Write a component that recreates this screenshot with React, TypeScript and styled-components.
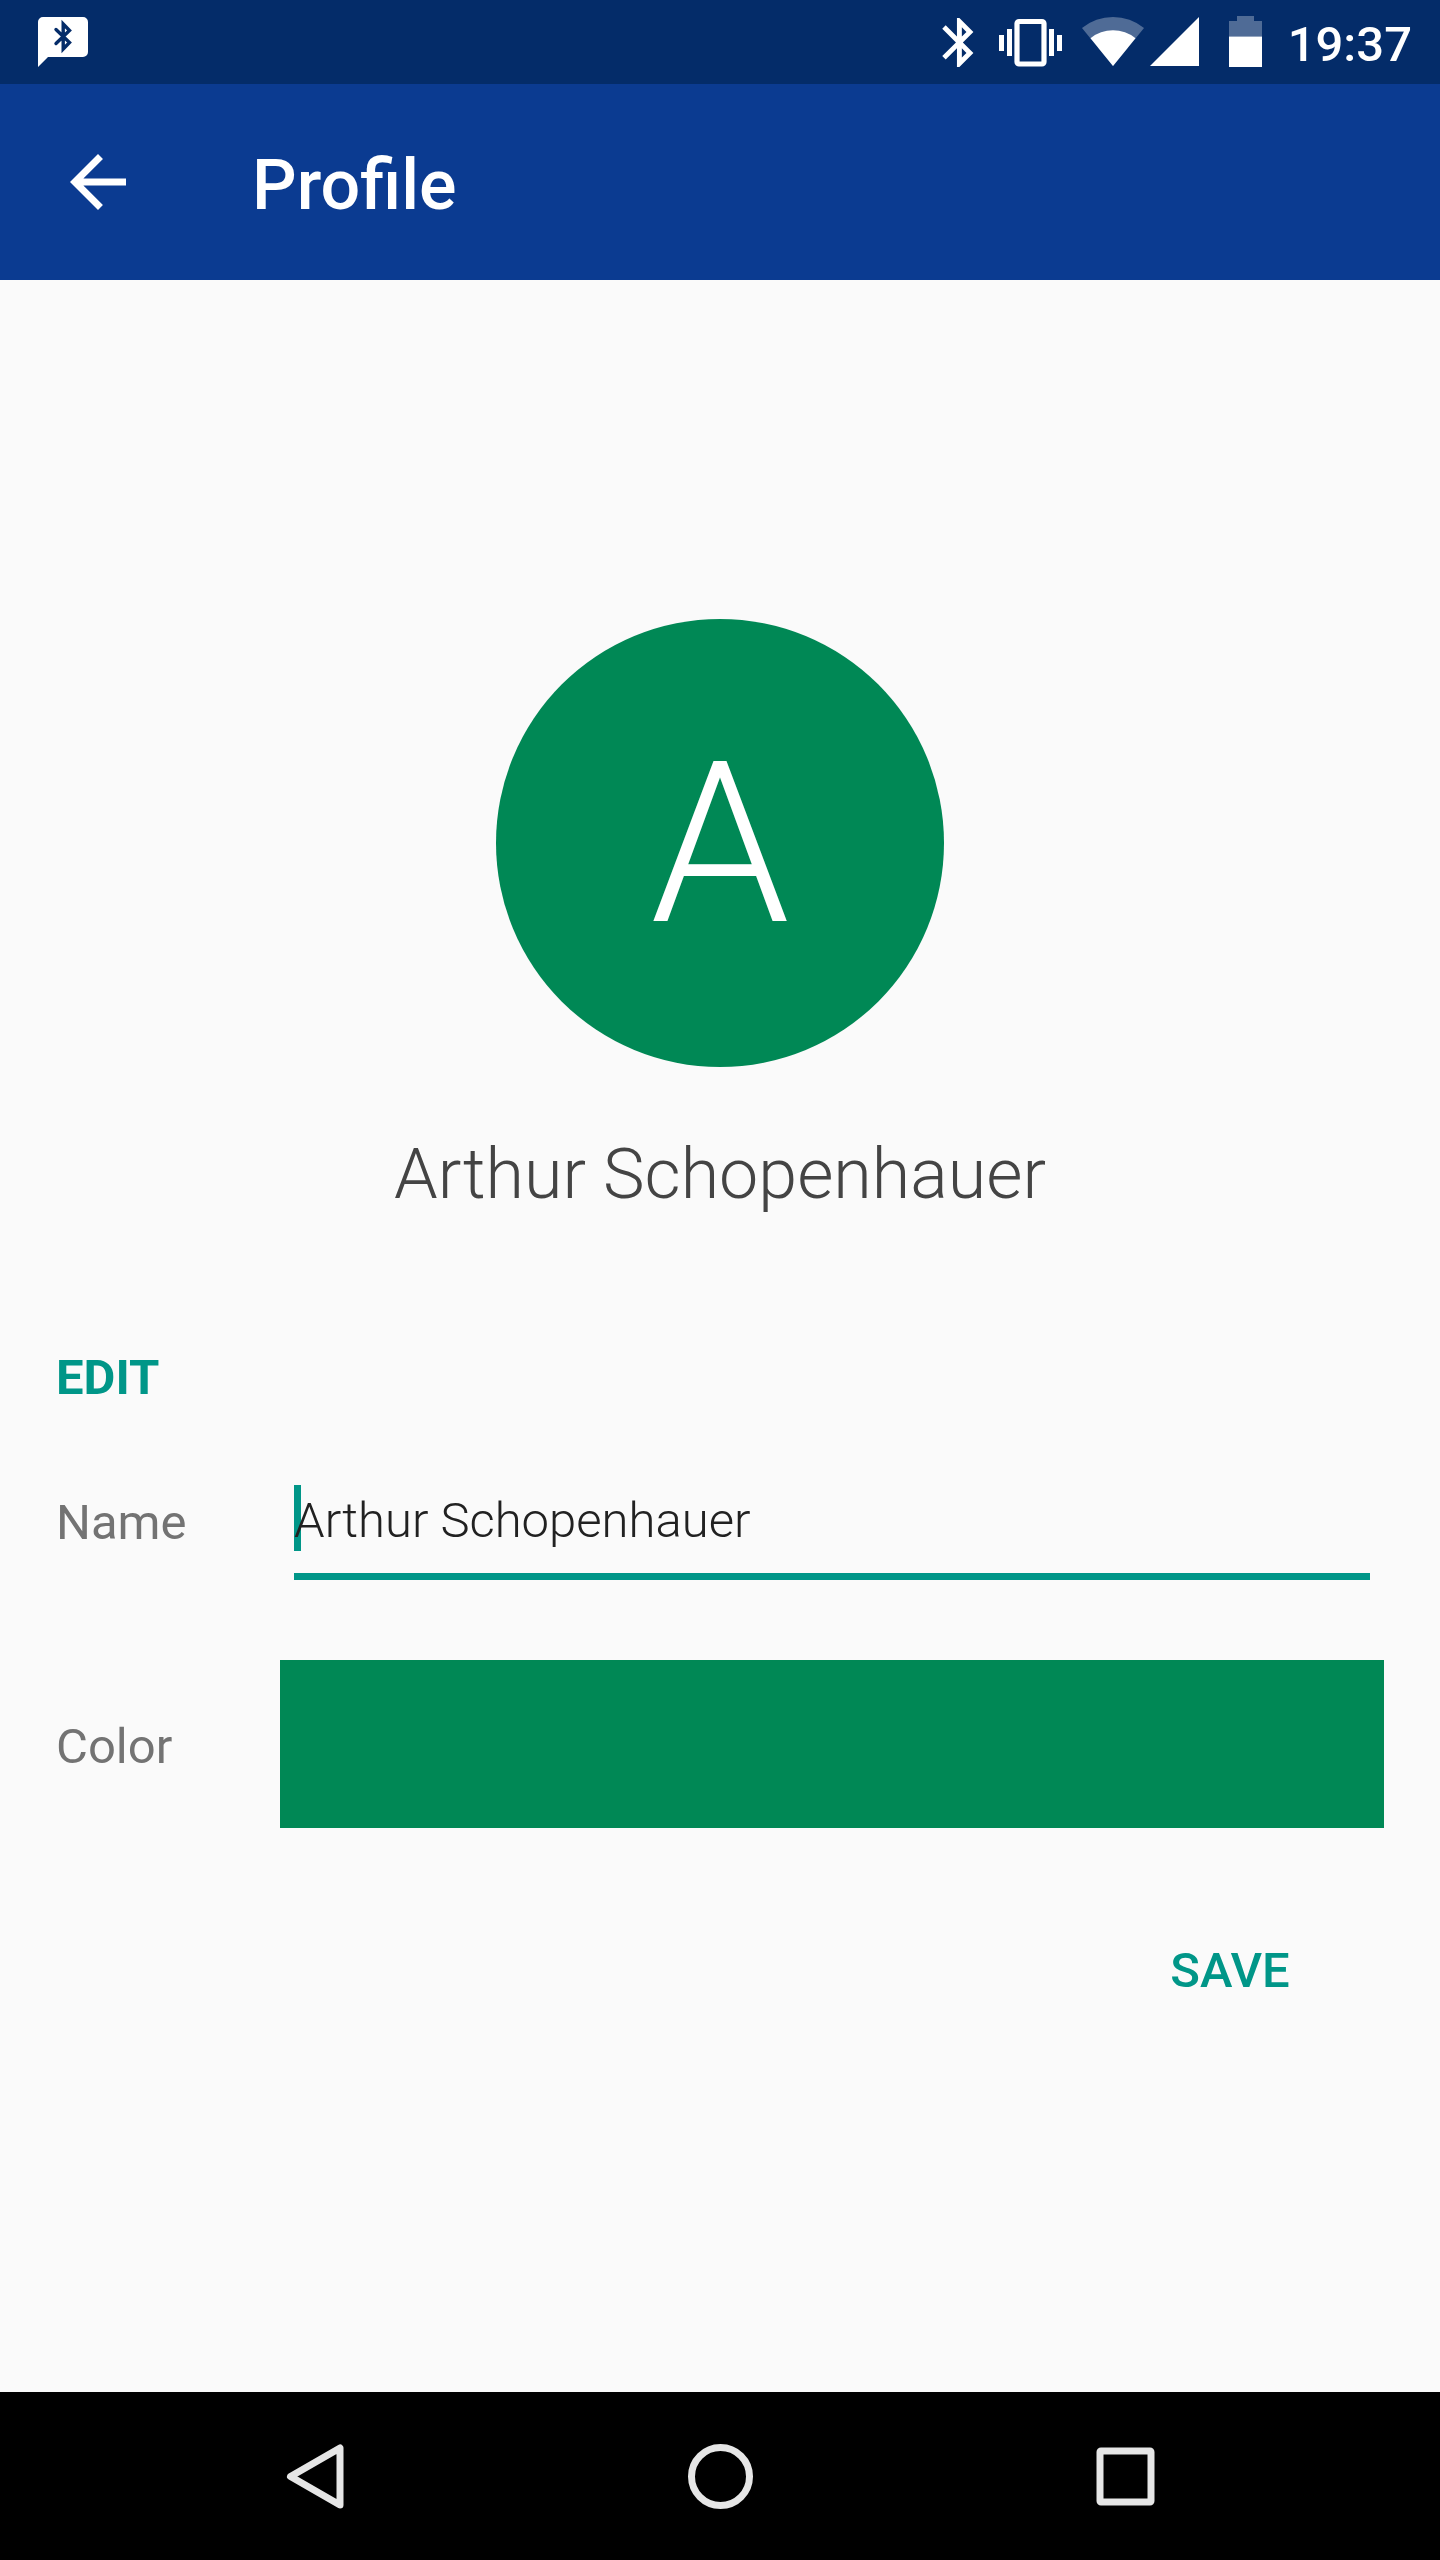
import React, { useState } from "react";
import styled, { createGlobalStyle } from "styled-components";

const color = {
  status: "#042c69",
  primary: "#0b3b91",
  accent: "#009688",
  page: "#fafafa",
  label: "#737373",
  heading: "#444444",
  text: "#212121",
  nav: "#e6e6e6",
};

const GlobalStyle = createGlobalStyle`
  *, *::before, *::after { box-sizing: border-box; }
  body {
    margin: 0;
    background: ${color.page};
    font-family: Roboto, "Noto Sans", sans-serif;
  }
`;

const Screen = styled.div`
  display: flex;
  flex-direction: column;
  min-height: 100vh;
`;

const StatusBar = styled.div`
  display: flex;
  align-items: center;
  justify-content: space-between;
  height: 84px;
  padding: 0 28px;
  background: ${color.status};
  color: #fff;
`;

const StatusGroup = styled.div`
  display: flex;
  align-items: center;
`;

const StatusIcon = styled.svg`
  display: block;
  height: 84px;
  fill: currentColor;
`;

const Clock = styled.time`
  padding-left: 10px;
  padding-top: 5px;
  font-size: 49px;
  line-height: 58px;
  font-weight: 500;
`;

const Toolbar = styled.header`
  display: flex;
  align-items: center;
  gap: 112px;
  height: 196px;
  padding: 0 56px;
  background: ${color.primary};
  color: #fff;
`;

const IconButton = styled.button`
  display: flex;
  align-items: center;
  justify-content: center;
  padding: 0;
  border: 0;
  background: none;
  color: inherit;
  cursor: pointer;
`;

const Title = styled.h1`
  margin: 0;
  padding-top: 6px;
  font-size: 70px;
  line-height: 82px;
  font-weight: 500;
`;

const Content = styled.main`
  flex: 1;
  padding: 0 56px 56px;
`;

const Hero = styled.section`
  display: flex;
  flex-direction: column;
  align-items: center;
  gap: 66px;
  padding: 339px 0 134px;
`;

const Avatar = styled.div<{ $fill: string }>`
  display: flex;
  align-items: center;
  justify-content: center;
  width: 448px;
  height: 448px;
  padding-top: 4px;
  border-radius: 50%;
  background: ${(p) => p.$fill};
  color: #fff;
  font-size: 224px;
  line-height: 262px;
  font-weight: 300;
`;

const PersonName = styled.h2`
  margin: 0;
  color: ${color.heading};
  font-size: 70px;
  line-height: 82px;
  font-weight: 300;
  text-align: center;
`;

const SectionTitle = styled.h3`
  margin: 0;
  color: ${color.accent};
  font-size: 49px;
  line-height: 58px;
  font-weight: 700;
  text-transform: uppercase;
`;

const Form = styled.form`
  display: flex;
  flex-direction: column;
  gap: 56px;
  margin-top: 29px;
`;

const FieldRow = styled.div`
  display: grid;
  grid-template-columns: 224px 1fr;
  align-items: center;
`;

const FieldLabel = styled.label`
  padding-top: 5px;
  color: ${color.label};
  font-size: 49px;
  line-height: 58px;
`;

const TextField = styled.div`
  position: relative;
  height: 168px;
  margin: 0 14px;
  padding: 50px 0 24px;
`;

const Caret = styled.span`
  position: absolute;
  left: 0;
  top: 49px;
  width: 7px;
  height: 66px;
  background: ${color.accent};
`;

const TextInput = styled.input`
  position: relative;
  display: block;
  width: 100%;
  height: 94px;
  padding: 0 0 18px;
  border: 0;
  border-bottom: 7px solid ${color.accent};
  outline: 0;
  background: transparent;
  color: ${color.text};
  caret-color: ${color.accent};
  font: 300 49px/58px Roboto, "Noto Sans", sans-serif;
`;

const ColorInput = styled.input`
  display: block;
  width: 100%;
  height: 168px;
  padding: 0;
  border: 0;
  background: none;
  cursor: pointer;
  appearance: none;

  &::-webkit-color-swatch-wrapper { padding: 0; }
  &::-webkit-color-swatch { border: 0; border-radius: 0; }
`;

const SaveButton = styled.button`
  align-self: flex-end;
  min-width: 308px;
  height: 168px;
  padding: 5px 28px 0;
  border: 0;
  background: none;
  color: ${color.accent};
  font: 500 49px/58px Roboto, "Noto Sans", sans-serif;
  text-transform: uppercase;
  cursor: pointer;
`;

const NavBar = styled.nav`
  display: grid;
  grid-template-columns: repeat(3, 1fr);
  height: 168px;
  padding: 0 112px;
  background: #000;
  color: ${color.nav};
`;

const NavIcon = styled.svg`
  width: 84px;
  height: 84px;
  fill: none;
  stroke: currentColor;
  stroke-width: 7;
  stroke-linejoin: round;
`;

function MessageIcon() {
  return (
    <StatusIcon width={70} viewBox="0 0 70 84" aria-hidden="true">
      <path d="M15 17h40a5 5 0 0 1 5 5v30a5 5 0 0 1-5 5H20L10 67V22a5 5 0 0 1 5-5z" />
      <path
        d="M28 29.5 41.5 42.5 35.2 49V24L41.5 30.5 28 43.5"
        fill="none"
        stroke={color.status}
        strokeWidth="3.4"
        strokeLinecap="round"
      />
    </StatusIcon>
  );
}

function BluetoothIcon() {
  return (
    <StatusIcon width={60} viewBox="0 0 60 84" aria-hidden="true">
      <path
        transform="translate(0 13) scale(2.45)"
        d="M17.71 7.71L12 2h-1v7.59L6.41 5 5 6.41 10.59 12 5 17.59 6.41 19 11 14.41V22h1l5.71-5.71-4.3-4.29 4.3-4.29zM13 5.83l1.88 1.88L13 9.59V5.83zm1.88 10.46L13 18.17v-3.76l1.88 1.88z"
      />
    </StatusIcon>
  );
}

function VibrateIcon() {
  return (
    <StatusIcon width={80} viewBox="0 0 80 84" aria-hidden="true">
      <rect x="27" y="21.5" width="27" height="42.5" rx="2" fill="none" stroke="currentColor" strokeWidth="5.2" />
      <path d="M17 29h5v27h-5zM9 35h5v16H9zM59 29h5v27h-5zM67 35h5v16h-5z" />
    </StatusIcon>
  );
}

function WifiIcon() {
  return (
    <StatusIcon width={77} viewBox="0 0 77 84" aria-hidden="true">
      <path d="M43 66 12 28a49 49 0 0 1 62 0z" opacity="0.3" />
      <path d="M43 66 20.5 38.2a36 36 0 0 1 45 0z" />
    </StatusIcon>
  );
}

function SignalIcon() {
  return (
    <StatusIcon width={67} viewBox="0 0 67 84" aria-hidden="true">
      <path d="M3 66 52 17v49z" />
    </StatusIcon>
  );
}

function BatteryIcon() {
  return (
    <StatusIcon width={64} viewBox="0 0 64 84" aria-hidden="true">
      <path d="M23 16h17v5h8v15.5H15V21h8z" opacity="0.3" />
      <path d="M15 36.5h33V67H15z" />
    </StatusIcon>
  );
}

export default function App() {
  const [name, setName] = useState("Arthur Schopenhauer");
  const [fill, setFill] = useState("#008855");

  return (
    <Screen>
      <GlobalStyle />
      <StatusBar>
        <StatusGroup>
          <MessageIcon />
        </StatusGroup>
        <StatusGroup>
          <BluetoothIcon />
          <VibrateIcon />
          <WifiIcon />
          <SignalIcon />
          <BatteryIcon />
          <Clock>19:37</Clock>
        </StatusGroup>
      </StatusBar>

      <Toolbar>
        <IconButton type="button" aria-label="Back">
          <svg width="84" height="84" viewBox="0 0 24 24" fill="currentColor" aria-hidden="true">
            <path d="M20 11H7.83l5.59-5.59L12 4l-8 8 8 8 1.41-1.41L7.83 13H20v-2z" />
          </svg>
        </IconButton>
        <Title>Profile</Title>
      </Toolbar>

      <Content>
        <Hero>
          <Avatar $fill={fill}>{name.charAt(0)}</Avatar>
          <PersonName>{name}</PersonName>
        </Hero>

        <SectionTitle>Edit</SectionTitle>
        <Form onSubmit={(e) => e.preventDefault()}>
          <FieldRow>
            <FieldLabel htmlFor="name">Name</FieldLabel>
            <TextField>
              <Caret />
              <TextInput
                id="name"
                type="text"
                value={name}
                onChange={(e) => setName(e.target.value)}
              />
            </TextField>
          </FieldRow>
          <FieldRow>
            <FieldLabel htmlFor="color">Color</FieldLabel>
            <ColorInput
              id="color"
              type="color"
              value={fill}
              onChange={(e) => setFill(e.target.value)}
            />
          </FieldRow>
          <SaveButton type="submit">Save</SaveButton>
        </Form>
      </Content>

      <NavBar aria-label="System">
        <IconButton type="button" aria-label="Go back">
          <NavIcon viewBox="0 0 84 84" aria-hidden="true">
            <path d="M67 14v57L17.5 42.5z" />
          </NavIcon>
        </IconButton>
        <IconButton type="button" aria-label="Home">
          <NavIcon viewBox="0 0 84 84" aria-hidden="true">
            <circle cx="42.5" cy="42.5" r="29" />
          </NavIcon>
        </IconButton>
        <IconButton type="button" aria-label="Recent apps">
          <NavIcon viewBox="0 0 84 84" aria-hidden="true">
            <rect x="17" y="17" width="51" height="51" rx="1" />
          </NavIcon>
        </IconButton>
      </NavBar>
    </Screen>
  );
}
